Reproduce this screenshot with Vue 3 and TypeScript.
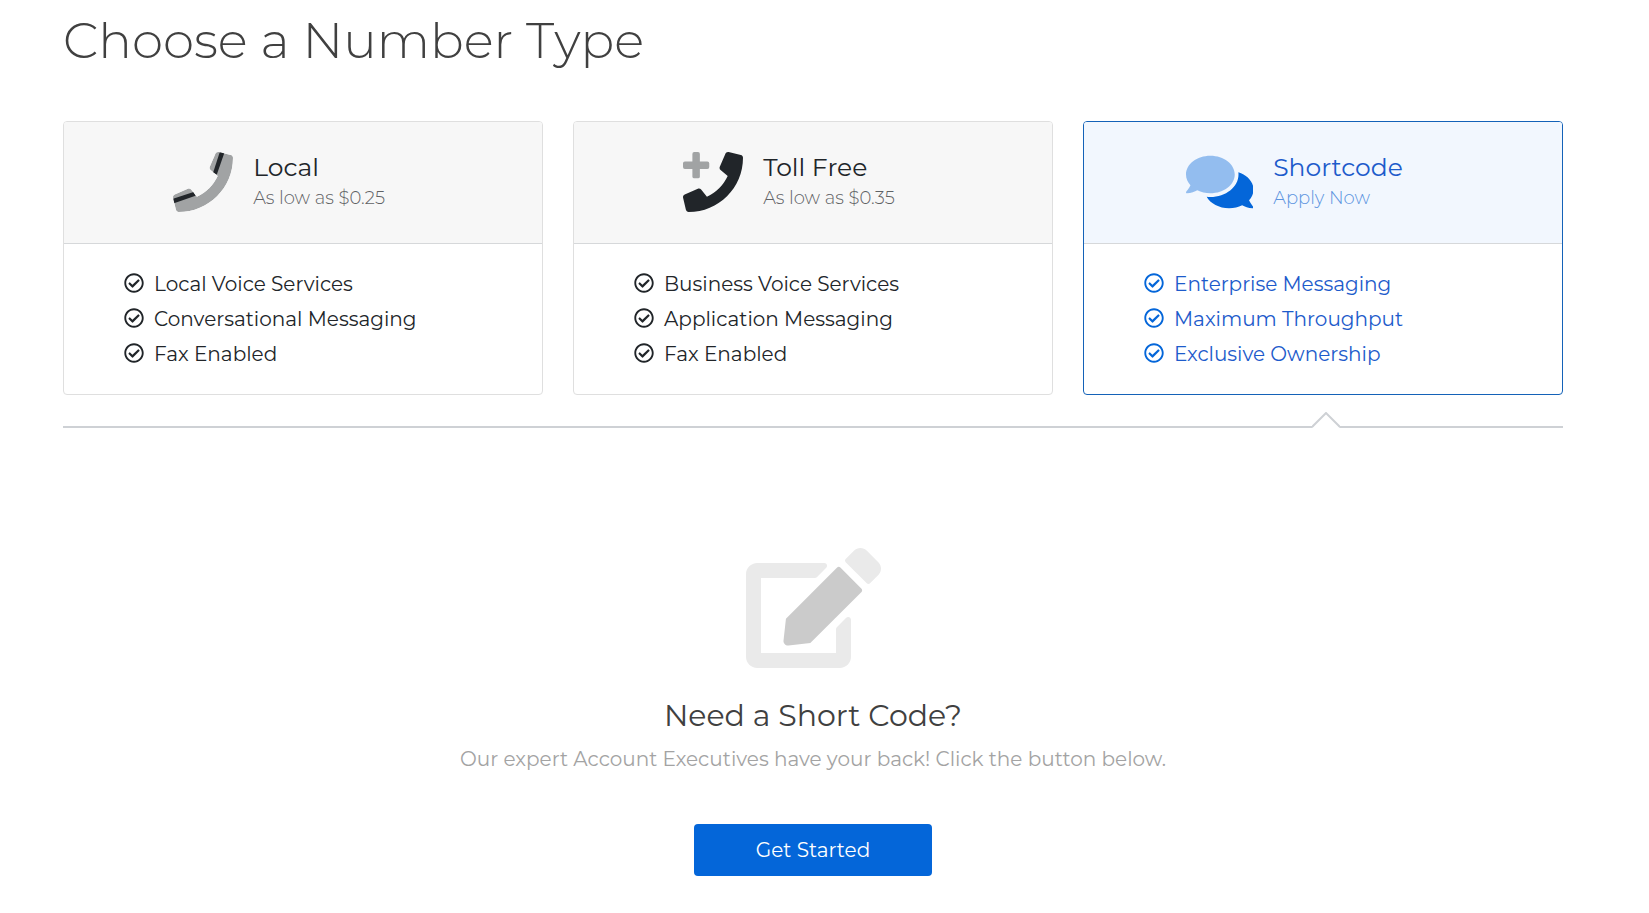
<script setup lang="ts">
import { computed, ref } from 'vue'

interface NumberType {
  id: string
  title: string
  note: string
  features: string[]
}

const types: NumberType[] = [
  {
    id: 'local',
    title: 'Local',
    note: 'As low as $0.25',
    features: ['Local Voice Services', 'Conversational Messaging', 'Fax Enabled'],
  },
  {
    id: 'tollfree',
    title: 'Toll Free',
    note: 'As low as $0.35',
    features: ['Business Voice Services', 'Application Messaging', 'Fax Enabled'],
  },
  {
    id: 'shortcode',
    title: 'Shortcode',
    note: 'Apply Now',
    features: ['Enterprise Messaging', 'Maximum Throughput', 'Exclusive Ownership'],
  },
]

const selected = ref(2)
const arrowLeft = computed(() => `${17.6 + selected.value * 33.3}%`)

const phonePath =
  'M493.4 24.6l-104-24c-11.3-2.6-22.9 3.3-27.5 13.9l-48 112c-4.2 9.8-1.4 21.3 6.9 28l60.6 49.6c-36 76.7-98.9 140.5-177.2 177.2l-49.6-60.6c-6.8-8.3-18.2-11.1-28-6.9l-112 48C3.9 366.5-2 378.1.6 389.4l24 104C27.1 504.2 36.7 512 48 512c256.1 0 464-207.5 464-464 0-11.2-7.7-20.9-18.6-23.4z'
</script>

<template>
  <main class="page">
    <h1 class="title">Choose a Number Type</h1>

    <div class="cards">
      <button
        v-for="(type, index) in types"
        :key="type.id"
        type="button"
        class="card"
        :class="{ active: selected === index }"
        :aria-pressed="selected === index"
        @click="selected = index"
      >
        <span class="card-head">
          <span class="card-icon">
            <svg v-if="type.id === 'local'" class="glyph" viewBox="0 0 512 512" aria-hidden="true">
              <defs>
                <clipPath id="handset"><path :d="phonePath" /></clipPath>
              </defs>
              <g clip-path="url(#handset)">
                <path class="faded" :d="phonePath" />
                <path d="M402 -8L440 2L374 192L342 176Z" />
                <path d="M-8 402L2 440L192 374L176 342Z" />
              </g>
            </svg>
            <svg v-else-if="type.id === 'tollfree'" class="glyph" viewBox="0 0 512 512" aria-hidden="true">
              <path :d="phonePath" />
              <path
                class="faded"
                d="M96 0h32a16 16 0 0 1 16 16v64h64a16 16 0 0 1 16 16v32a16 16 0 0 1-16 16h-64v64a16 16 0 0 1-16 16H96a16 16 0 0 1-16-16v-64H16a16 16 0 0 1-16-16V96a16 16 0 0 1 16-16h64V16A16 16 0 0 1 96 0z"
              />
            </svg>
            <svg v-else class="glyph" viewBox="0 0 576 512" aria-hidden="true">
              <path
                class="faded"
                d="M416 192c0-88.4-93.1-160-208-160S0 103.6 0 192c0 34.3 14.1 65.9 38 92-13.4 30.2-35.5 54.2-35.8 54.5-2.2 2.3-2.8 5.7-1.5 8.7S4.8 352 8 352c36.6 0 66.9-12.3 88.7-25 32.2 15.7 70.3 25 111.3 25 114.9 0 208-71.6 208-160z"
              />
              <path
                d="M538 412c23.9-26 38-57.7 38-92 0-66.9-53.5-124.2-129.3-148.1.9 6.6 1.3 13.3 1.3 20.1 0 105.9-107.7 192-240 192-10.8 0-21.3-.8-31.7-1.9C207.8 439.6 281.8 480 368 480c41 0 79.1-9.2 111.3-25 21.8 12.7 52.1 25 88.7 25 3.2 0 6.1-1.9 7.3-4.8 1.3-2.9.7-6.3-1.5-8.7-.3-.3-22.4-24.2-35.8-54.5z"
              />
            </svg>
          </span>
          <span class="card-label">
            <span class="card-title">{{ type.title }}</span>
            <span class="card-note">{{ type.note }}</span>
          </span>
        </span>
        <span class="card-body">
          <span v-for="feature in type.features" :key="feature" class="feature">
            <svg class="check" viewBox="0 0 512 512" aria-hidden="true">
              <path
                d="M256 8C119.033 8 8 119.033 8 256s111.033 248 248 248 248-111.033 248-248S392.967 8 256 8zm0 48c110.532 0 200 89.451 200 200 0 110.532-89.451 200-200 200-110.532 0-200-89.451-200-200 0-110.532 89.451-200 200-200m140.204 130.267l-22.536-22.718c-4.667-4.705-12.265-4.736-16.97-.068L215.346 303.697l-59.792-60.277c-4.667-4.705-12.265-4.736-16.97-.069l-22.719 22.536c-4.705 4.667-4.736 12.265-.068 16.971l90.781 91.516c4.667 4.705 12.265 4.736 16.97.068l172.589-171.204c4.704-4.668 4.734-12.266.066-16.971z"
              />
            </svg>
            <span>{{ feature }}</span>
          </span>
        </span>
      </button>
    </div>

    <div class="divider">
      <svg class="arrow" :style="{ left: arrowLeft }" viewBox="0 0 28 16" aria-hidden="true">
        <path class="arrow-fill" d="M0 16L14 1L28 16Z" />
        <path class="arrow-line" d="M0 15L14 1L28 15" />
      </svg>
    </div>

    <section class="cta">
      <svg class="edit" viewBox="0 0 576 512" aria-hidden="true">
        <path
          class="edit-frame"
          d="M564.6 60.3l-48.8-48.8c-15.2-15.2-39.9-15.2-55.2 0l-35.4 35.4c-3.8 3.8-3.8 10 0 13.8l90.2 90.2c3.8 3.8 10 3.8 13.8 0l35.4-35.4c15.2-15.3 15.2-40 0-55.2zM384 346.2V448H64V128h229.8c3.2 0 6.2-1.3 8.5-3.5l40-40c7.6-7.6 2.2-20.5-8.5-20.5H48C21.5 64 0 85.5 0 112v352c0 26.5 21.5 48 48 48h352c26.5 0 48-21.5 48-48V306.2c0-10.7-12.9-16-20.5-8.5l-40 40c-2.2 2.3-3.5 5.3-3.5 8.5z"
        />
        <path
          class="edit-pencil"
          d="M402.6 83.2l90.2 90.2c3.8 3.8 3.8 10 0 13.8L274.4 405.6l-92.8 10.3c-12.4 1.4-22.9-9.1-21.5-21.5l10.3-92.8L388.8 83.2c3.8-3.8 10-3.8 13.8 0z"
        />
      </svg>
      <h2 class="cta-title">Need a Short Code?</h2>
      <p class="cta-text">Our expert Account Executives have your back! Click the button below.</p>
      <button type="button" class="cta-button">Get Started</button>
    </section>
  </main>
</template>

<style>
body {
  margin: 0;
  background: #fff;
}
</style>

<style scoped>
.page {
  padding: 11px 86px 36px 63px;
  font-family: Montserrat, Inter, 'Open Sans', sans-serif;
  font-weight: 400;
  color: #212529;
}

.title {
  margin: 0 0 50px;
  font-size: 50px;
  line-height: 60px;
  font-weight: 300;
  color: #404040;
}

.cards {
  display: grid;
  grid-template-columns: repeat(3, 1fr);
  gap: 30px;
}

.card {
  display: flex;
  flex-direction: column;
  padding: 0;
  overflow: hidden;
  border: 1px solid #dfdfdf;
  border-radius: 4px;
  background: #fff;
  font: inherit;
  color: inherit;
  text-align: left;
  cursor: pointer;
}

.card.active {
  border-color: #1462b8;
  color: #1d5bcb;
}

.card-head {
  display: grid;
  grid-template-columns: 2fr 3fr;
  align-items: center;
  align-self: stretch;
  padding: 30px 0 31px;
  background: #f7f7f7;
  border-bottom: 1px solid #d6d8da;
}

.active .card-head {
  background: #f2f7fe;
}

.card-icon {
  display: flex;
  justify-content: flex-end;
  margin-left: -2px;
  padding-right: 22px;
}

.glyph {
  height: 60px;
  fill: #212529;
}

.active .glyph,
.active .check {
  fill: #0466d9;
}

.faded {
  opacity: 0.4;
}

.card-label {
  display: flex;
  flex-direction: column;
  gap: 2px;
  margin-left: -2px;
}

.card-title {
  font-size: 25px;
  line-height: 30px;
}

.card-note {
  font-size: 18px;
  line-height: 28px;
  font-weight: 300;
  color: #5f6265;
}

.active .card-note {
  color: #5b94e0;
}

.card-body {
  display: flex;
  flex-direction: column;
  padding: 23px 60px 22px;
}

.feature {
  display: flex;
  align-items: center;
  gap: 10px;
  font-size: 20px;
  line-height: 35px;
}

.check {
  width: 20px;
  height: 20px;
  margin-bottom: 4px;
  fill: #212529;
}

.divider {
  position: relative;
  height: 2px;
  margin-top: 31px;
  background: #ced1d5;
}

.arrow {
  position: absolute;
  bottom: 0;
  width: 28px;
  height: 16px;
  transform: translateX(-50%);
}

.arrow-fill {
  fill: #fff;
}

.arrow-line {
  fill: none;
  stroke: #ced1d5;
  stroke-width: 2;
}

.cta {
  display: flex;
  flex-direction: column;
  align-items: center;
  padding-top: 120px;
  text-align: center;
}

.edit {
  height: 120px;
}

.edit-frame {
  fill: #eaeaea;
}

.edit-pencil {
  fill: #cbcbcb;
}

.cta-title {
  margin: 28px 0 0;
  font-size: 30px;
  line-height: 40px;
  font-weight: 400;
  color: #404040;
}

.cta-text {
  margin: 7px 0 49px;
  font-size: 20px;
  line-height: 32px;
  color: #a3a3a3;
}

.cta-button {
  padding: 10px 62px;
  border: 0;
  border-radius: 4px;
  background: #0466d9;
  font: inherit;
  font-size: 20px;
  line-height: 32px;
  color: #fff;
  cursor: pointer;
}
</style>
